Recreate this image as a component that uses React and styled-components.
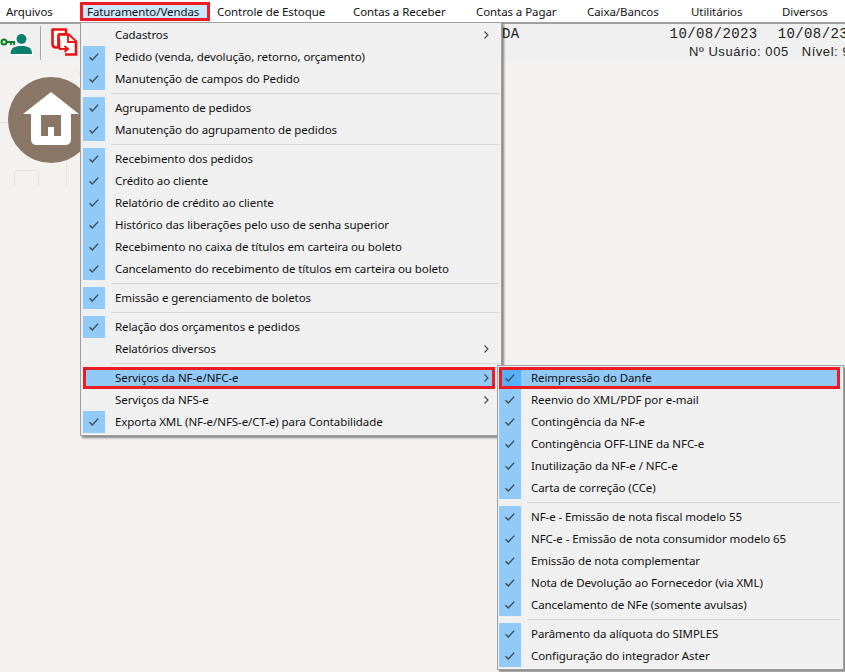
import React from "react";
import styled, { createGlobalStyle } from "styled-components";

const Global = createGlobalStyle`
  html, body { margin: 0; padding: 0; background: #f4f2f0; }
  body { width: 845px; height: 672px; overflow: hidden; font-family: "Noto Sans", sans-serif; font-size: 11.5px; letter-spacing: -0.08px; color: #000; }
`;

const Page = styled.div`
  position: relative;
  width: 845px;
  height: 672px;
  overflow: hidden;
`;

const MenuBar = styled.div`
  display: flex;
  box-sizing: border-box;
  height: 24px;
  background: #fff;
  border-bottom: 2px solid #a0a0a0;
  padding-top: 2px;
`;

const TopItem = styled.div`
  display: flex;
  align-items: center;
  box-sizing: border-box;
  flex: none;
  width: ${(p) => p.$width}px;
  height: 19px;
  padding-left: ${(p) => p.$pad}px;
  white-space: nowrap;
  color: #111;
  ${(p) => p.$active && "background: #cce8ff; border: 3px solid #ed1c24; padding-left: 4px;"}
`;

const Toolbar = styled.div`
  display: flex;
  align-items: center;
  height: 38px;
  background: #f0f0f0;
`;

const ToolDivider = styled.div`
  width: 1px;
  height: 34px;
  margin: 0 10px 0 7px;
  background: #a8a8a8;
`;

const HomeArea = styled.div`
  display: flex;
  width: 80px;
  height: 130px;
`;

const InfoBlock = styled.div`
  position: absolute;
  top: 24px;
  left: 502px;
  right: 0;
  overflow: hidden;
  color: #222;
`;

const MonoRow = styled.div`
  display: flex;
  font-family: "Liberation Mono", monospace;
  font-size: 14px;
  letter-spacing: 0.4px;
  height: 19px;
  align-items: center;
`;

const DateText = styled.span`
  margin-left: ${(p) => p.$gap}px;
  white-space: nowrap;
`;

const UserRow = styled.div`
  display: flex;
  margin: 1px 0 0 187px;
  font-family: "Liberation Sans", sans-serif;
  font-size: 13px;
  letter-spacing: 0.55px;
  white-space: nowrap;
`;

const UserLevel = styled.span`
  margin-left: 13px;
`;

const Row = styled.div`
  position: relative;
  display: flex;
  align-items: center;
  box-sizing: border-box;
  height: 22px;
  padding: 0 0 2px 32px;
  white-space: nowrap;
  color: #111;
  ${(p) => p.$hot && "background: #91c9f7;"}
`;

const Menu = styled.div`
  position: absolute;
  top: ${(p) => p.$top}px;
  left: ${(p) => p.$left}px;
  width: ${(p) => p.$width}px;
  box-sizing: border-box;
  padding: 1px ${(p) => p.$padRight}px 2px ${(p) => p.$padLeft}px;
  background: #f0f0f0;
  border: 1px solid #a0a0a0;
  box-shadow: 2px 2px 2px rgba(0, 0, 0, 0.45);

  ${Row} {
    margin-right: ${(p) => p.$rowInset}px;
  }
`;

const Outline = styled.div`
  position: absolute;
  inset: 0;
  border: 3px solid #ed1c24;
  pointer-events: none;
`;

const Tick = styled.div`
  position: absolute;
  left: 0;
  top: 0;
  width: 22px;
  height: 22px;
  display: flex;
  align-items: center;
  justify-content: center;
  background: ${(p) => (p.$hot ? "#56b0fa" : "#91c9f7")};
`;

const Arrow = styled.svg`
  position: absolute;
  right: 6px;
  top: 7px;
`;

const Separator = styled.div`
  height: 1px;
  margin: 3px 0 3px 28px;
  background: #d7d7d7;
`;

function Check() {
  return (
    <svg width="12" height="10" viewBox="0 0 12 10">
      <path d="M1.5 5.2 L4.3 8 L10.2 1.6" fill="none" stroke="#3f4a54" strokeWidth="1.4" />
    </svg>
  );
}

function MenuRow({ label, check, arrow, hot, boxed, tickHot }) {
  return (
    <Row $hot={hot}>
      {check && (
        <Tick $hot={tickHot}>
          <Check />
        </Tick>
      )}
      {label}
      {arrow && (
        <Arrow width="5" height="8" viewBox="0 0 5 8">
          <path d="M0.5 0.5 L4 4 L0.5 7.5" fill="none" stroke="#444" strokeWidth="1.1" />
        </Arrow>
      )}
      {boxed && <Outline />}
    </Row>
  );
}

const topItems = [
  { label: "Arquivos", width: 80, pad: 6 },
  { label: "Faturamento/Vendas", width: 130, pad: 7, active: true },
  { label: "Controle de Estoque", width: 136, pad: 7 },
  { label: "Contas a Receber", width: 123, pad: 7 },
  { label: "Contas a Pagar", width: 111, pad: 7 },
  { label: "Caixa/Bancos", width: 104, pad: 7 },
  { label: "Utilitários", width: 91, pad: 7 },
  { label: "Diversos", width: 70, pad: 7 },
];

const mainMenu = [
  [
    { label: "Cadastros", arrow: true },
    { label: "Pedido (venda, devolução, retorno, orçamento)", check: true },
    { label: "Manutenção de campos do Pedido", check: true },
  ],
  [
    { label: "Agrupamento de pedidos", check: true },
    { label: "Manutenção do agrupamento de pedidos", check: true },
  ],
  [
    { label: "Recebimento dos pedidos", check: true },
    { label: "Crédito ao cliente", check: true },
    { label: "Relatório de crédito ao cliente", check: true },
    { label: "Histórico das liberações pelo uso de senha superior", check: true },
    { label: "Recebimento no caixa de títulos em carteira ou boleto", check: true },
    { label: "Cancelamento do recebimento de títulos em carteira ou boleto", check: true },
  ],
  [{ label: "Emissão e gerenciamento de boletos", check: true }],
  [
    { label: "Relação dos orçamentos e pedidos", check: true },
    { label: "Relatórios diversos", arrow: true },
  ],
  [
    { label: "Serviços da NF-e/NFC-e", arrow: true, hot: true, boxed: true },
    { label: "Serviços da NFS-e", arrow: true },
    { label: "Exporta XML (NF-e/NFS-e/CT-e) para Contabilidade", check: true },
  ],
];

const subMenu = [
  [
    { label: "Reimpressão do Danfe", check: true, hot: true, boxed: true, tickHot: true },
    { label: "Reenvio do XML/PDF por e-mail", check: true },
    { label: "Contingência da NF-e", check: true },
    { label: "Contingência OFF-LINE da NFC-e", check: true },
    { label: "Inutilização da NF-e / NFC-e", check: true },
    { label: "Carta de correção (CCe)", check: true },
  ],
  [
    { label: "NF-e - Emissão de nota fiscal modelo 55", check: true },
    { label: "NFC-e - Emissão de nota consumidor modelo 65", check: true },
    { label: "Emissão de nota complementar", check: true },
    { label: "Nota de Devolução ao Fornecedor (via XML)", check: true },
    { label: "Cancelamento de NFe (somente avulsas)", check: true },
  ],
  [
    { label: "Parâmento da alíquota do SIMPLES", check: true },
    { label: "Configuração do integrador Aster", check: true },
  ],
];

function MenuGroups({ groups }) {
  return groups.map((group, i) => (
    <React.Fragment key={i}>
      {i > 0 && <Separator />}
      {group.map((item) => (
        <MenuRow key={item.label} {...item} />
      ))}
    </React.Fragment>
  ));
}

function KeyUserIcon() {
  return (
    <svg width="33" height="26" viewBox="0 0 33 26">
      <g stroke="#fff" strokeWidth="3" paintOrder="stroke">
        <circle cx="21.5" cy="9" r="5" fill="#0b7f6e" />
        <path d="M10.5 24 C10.5 18 14 16 21.5 16 C29 16 32 18 32 24 Z" fill="#0b7f6e" />
      </g>
      <circle cx="4" cy="12" r="2.5" fill="#d8efc8" stroke="#0a7c2c" strokeWidth="2" />
      <path d="M6.5 12 H15 M11 12 V15 M14 12 V15" stroke="#0a7c2c" strokeWidth="1.8" fill="none" />
    </svg>
  );
}

function ExitIcon() {
  return (
    <svg width="27" height="30" viewBox="0 0 27 30">
      <path d="M1.5 1.5 H15 V6.5 H8 V19.5 H5 Q1.5 19.5 1.5 16 Z" fill="#fff" stroke="#ee1111" strokeWidth="2.6" strokeLinejoin="round" />
      <path d="M7.5 6.5 H17.5 L25 13.5 V26.5 H14 M7.5 6.5 V20" fill="#fff" stroke="#ee1111" strokeWidth="2.6" />
      <path d="M17 7 V14 H24.5" fill="#fff" stroke="#ee1111" strokeWidth="1.8" />
      <path d="M8 21 H16 M13.5 18 L17 21 L13.5 24" fill="none" stroke="#ee1111" strokeWidth="1.8" />
    </svg>
  );
}

function HomeArt() {
  return (
    <svg width="80" height="130" viewBox="0 62 80 130">
      <g fill="none" stroke="#e8e3dc" strokeWidth="1">
        <path d="M0 122.5 H10" />
        <path d="M14.5 186 V173 Q14.5 170.5 17 170.5 H36 Q38.5 170.5 38.5 173 V186" />
        <path d="M66.5 160 V186" />
        <path d="M73 67 L80 74" />
      </g>
      <circle cx="51" cy="120" r="43" fill="#8a7664" />
      <path d="M23 114 L51 92 L79 114 Z" fill="#fff" />
      <path d="M31 112 H71 V139 Q71 145 65 145 H37 Q31 145 31 139 Z" fill="#fff" />
      <path d="M41 115 H61 V136 H54 V127 H48 V136 H41 Z" fill="#8a7664" />
    </svg>
  );
}

export default function App() {
  return (
    <Page>
      <Global />
      <MenuBar>
        {topItems.map((item) => (
          <TopItem key={item.label} $width={item.width} $pad={item.pad} $active={item.active}>
            {item.label}
          </TopItem>
        ))}
      </MenuBar>
      <Toolbar>
        <KeyUserIcon />
        <ToolDivider />
        <ExitIcon />
      </Toolbar>
      <HomeArea>
        <HomeArt />
      </HomeArea>
      <InfoBlock>
        <MonoRow>
          DA
          <DateText $gap={150}>10/08/2023</DateText>
          <DateText $gap={20}>10/08/23</DateText>
        </MonoRow>
        <UserRow>
          Nº Usuário: 005
          <UserLevel>Nível: 9</UserLevel>
        </UserRow>
      </InfoBlock>
      <Menu $top={22} $left={80} $width={422} $padLeft={2} $padRight={2} $rowInset={4}>
        <MenuGroups groups={mainMenu} />
      </Menu>
      <Menu $top={365} $left={497} $width={347} $padLeft={1} $padRight={3} $rowInset={0}>
        <MenuGroups groups={subMenu} />
      </Menu>
    </Page>
  );
}
